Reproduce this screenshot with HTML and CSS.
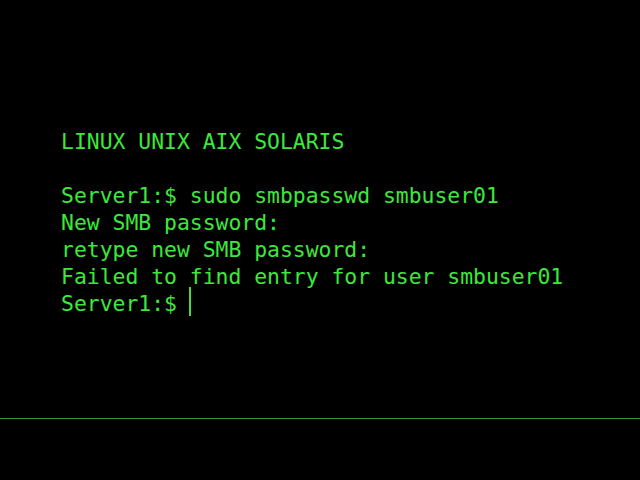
FILE: index.html
```html
<!DOCTYPE html>
<html>
<head>
<meta charset="utf-8">
<link rel="stylesheet" href="styles.css">
</head>
<body>
<div class="screen">
  <div class="terminal">
    <div class="line">LINUX UNIX AIX SOLARIS</div>
    <div class="line"> </div>
    <div class="line">Server1:$ sudo smbpasswd smbuser01</div>
    <div class="line">New SMB password:</div>
    <div class="line">retype new SMB password:</div>
    <div class="line">Failed to find entry for user smbuser01</div>
    <div class="line">Server1:$ <span class="cursor"></span></div>
  </div>
  <div class="rule"></div>
</div>
</body>
</html>
```
FILE: styles.css
```css
html, body {
  margin: 0;
  padding: 0;
  background: #000;
}
.screen {
  width: 640px;
  height: 480px;
  background: #000;
  display: flex;
  flex-direction: column;
}
.terminal {
  padding: 128px 0 0 61px;
  height: 418px;
  box-sizing: border-box;
  font-family: "DejaVu Sans Mono", monospace;
  font-size: 21.4px;
  line-height: 27px;
  color: #3ce83c;
}
.line {
  height: 27px;
  white-space: pre;
}
.cursor {
  display: inline-block;
  width: 2px;
  height: 29px;
  margin-top: -4px;
  background: #45d845;
  vertical-align: -5px;
  margin-left: -1px;
}
.rule {
  height: 1px;
  background: #2f9a2f;
}
```
